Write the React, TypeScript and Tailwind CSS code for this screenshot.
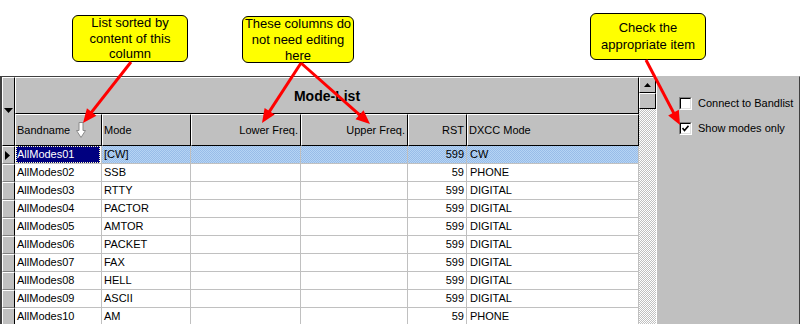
import React from "react";

const rows: [string, string, string, string][] = [
  ["AllModes01", "[CW]", "599", "CW"],
  ["AllModes02", "SSB", "59", "PHONE"],
  ["AllModes03", "RTTY", "599", "DIGITAL"],
  ["AllModes04", "PACTOR", "599", "DIGITAL"],
  ["AllModes05", "AMTOR", "599", "DIGITAL"],
  ["AllModes06", "PACKET", "599", "DIGITAL"],
  ["AllModes07", "FAX", "599", "DIGITAL"],
  ["AllModes08", "HELL", "599", "DIGITAL"],
  ["AllModes09", "ASCII", "599", "DIGITAL"],
  ["AllModes10", "AM", "59", "PHONE"],
];

function Arrow({ x1, y1, x2, y2 }: { x1: number; y1: number; x2: number; y2: number }) {
  const dx = x2 - x1;
  const dy = y2 - y1;
  const len = Math.sqrt(dx * dx + dy * dy);
  const ux = dx / len;
  const uy = dy / len;
  const hl = 14;
  const hw = 6;
  const bx = x2 - ux * hl;
  const by = y2 - uy * hl;
  const px = -uy;
  const py = ux;
  const pts = `${x2},${y2} ${bx + px * hw},${by + py * hw} ${bx - px * hw},${by - py * hw}`;
  return (
    <g>
      <line x1={x1} y1={y1} x2={bx + ux * 2} y2={by + uy * 2} stroke="#ff0000" strokeWidth={3} />
      <polygon points={pts} fill="#ff0000" />
    </g>
  );
}

const hdr =
  "h-[32px] bg-[#c0c0c0] border-t border-l border-t-white border-l-white border-r border-b border-r-black border-b-black flex items-center text-[11px] text-black shrink-0";
const cell = "h-[18px] border-r border-b border-[#c0c0c0] flex items-center text-[11px] text-black shrink-0 overflow-hidden whitespace-nowrap";
const selBg =
  "bg-[image:repeating-conic-gradient(#98bce8_0_25%,#b6d4f4_0_50%)] bg-[length:2px_2px]";

export default function App() {
  return (
    <div className="relative w-[800px] h-[324px] bg-white overflow-hidden font-['Liberation_Sans',Arial,sans-serif] select-none">
      {/* Callouts strip */}
      <div className="h-[76px] flex items-start">
        <div className="ml-[72px] mt-[15px] w-[116px] h-[47px] bg-[#ffff00] border border-black rounded-[6px] flex items-center justify-center text-center text-[13px] leading-[15.5px] text-black">
          <div>
            List sorted by
            <br />
            content of this
            <br />
            column
          </div>
        </div>
        <div className="ml-[54px] mt-[16px] w-[112px] h-[47px] bg-[#ffff00] border border-black rounded-[6px] flex items-center justify-center text-center text-[13px] leading-[16px] text-black whitespace-nowrap">
          <div>
            These columns do
            <br />
            not need editing
            <br />
            here
          </div>
        </div>
        <div className="ml-[236px] mt-[13px] w-[116px] h-[47px] bg-[#ffff00] border border-black rounded-[6px] flex items-center justify-center text-center text-[13px] leading-[16.5px] text-black">
          <div>
            Check the
            <br />
            appropriate item
          </div>
        </div>
      </div>

      {/* Main area */}
      <div className="flex h-[248px]">
        {/* Grid */}
        <div className="w-[639px] shrink-0 border-l-2 border-l-[#404040] border-t border-t-[#404040] flex flex-col">
          {/* Header */}
          <div className="flex h-[69px] shrink-0">
            <div className="w-[13px] h-[69px] bg-[#c0c0c0] border-t border-l border-white border-r border-r-black border-b border-b-black flex flex-col items-center shrink-0">
              <div className="h-[30px]" />
              <svg width="9" height="5" viewBox="0 0 9 5">
                <polygon points="0,0 9,0 4.5,5" fill="#000" />
              </svg>
            </div>
            <div className="flex flex-col">
              <div className="w-[624px] h-[37px] bg-[#c0c0c0] border-t border-l border-t-white border-l-white border-r border-b border-r-black border-b-black flex items-center justify-center">
                <span className="font-bold text-[14px] text-black mt-[1px]">Mode-List</span>
              </div>
              <div className="flex">
                <div className={`${hdr} w-[87px] pl-[1px]`}>
                  <span>Bandname</span>
                  <svg className="ml-[6px]" width="10" height="16" viewBox="0 0 10 16">
                    <polygon
                      points="3,0.5 7,0.5 7,8.5 9.5,8.5 5,15.5 0.5,8.5 3,8.5"
                      fill="#ffffff"
                      stroke="#8a8a8a"
                      strokeWidth="1"
                    />
                  </svg>
                </div>
                <div className={`${hdr} w-[89px] pl-[1px]`}>Mode</div>
                <div className={`${hdr} w-[110px] justify-end pr-[2px]`}>Lower Freq.</div>
                <div className={`${hdr} w-[107px] justify-end pr-[2px]`}>Upper Freq.</div>
                <div className={`${hdr} w-[59px] justify-end pr-[2px]`}>RST</div>
                <div className={`${hdr} w-[172px] pl-[1px]`}>DXCC Mode</div>
              </div>
            </div>
          </div>
          {/* Body */}
          <div className="flex flex-col">
            {rows.map((r, i) => {
              const sel = i === 0;
              const bg = sel ? selBg : "bg-white";
              return (
                <div key={r[0]} className="flex h-[18px] shrink-0">
                  <div className="w-[13px] h-[18px] bg-[#c0c0c0] border-t border-l border-white border-b border-b-[#808080] border-r border-r-black flex items-center pl-[2px] shrink-0">
                    {sel && (
                      <svg width="5" height="9" viewBox="0 0 5 9">
                        <polygon points="0,0 5,4.5 0,9" fill="#000" />
                      </svg>
                    )}
                  </div>
                  <div className={`${cell} w-[87px] ${sel ? "bg-white" : "bg-white"}`}>
                    {sel ? (
                      <div className="ml-[1px] w-[84px] h-[17px] bg-[#000080] text-white outline-1 outline-dotted outline-[#ffffc0] -outline-offset-1 flex items-center pl-[1px]">
                        {r[0]}
                      </div>
                    ) : (
                      <span className="pl-[2px]">{r[0]}</span>
                    )}
                  </div>
                  <div className={`${cell} w-[89px] pl-[2px] ${bg}`}>{r[1]}</div>
                  <div className={`${cell} w-[110px] ${bg}`} />
                  <div className={`${cell} w-[107px] ${bg}`} />
                  <div className={`${cell} w-[59px] justify-end pr-[2px] ${bg}`}>{r[2]}</div>
                  <div className={`${cell} w-[172px] pl-[3px] ${bg}`}>{r[3]}</div>
                </div>
              );
            })}
          </div>
        </div>

        {/* Vertical scrollbar */}
        <div className="w-[17px] shrink-0 flex flex-col border-t border-t-[#404040] bg-[image:repeating-conic-gradient(#c0c0c0_0_25%,#ffffff_0_50%)] bg-[length:2px_2px]">
          <div className="h-[16px] bg-[#c0c0c0] border-t border-l border-white border-r border-b border-r-black border-b-black flex items-center justify-center">
            <svg width="7" height="4" viewBox="0 0 7 4">
              <polygon points="0,4 7,4 3.5,0" fill="#000" />
            </svg>
          </div>
          <div className="h-[16px] bg-[#c0c0c0] border-t border-l border-white border-r border-b border-r-black border-b-black" />
        </div>

        {/* Right panel */}
        <div className="w-[144px] shrink-0 bg-[#c0c0c0] border-l border-l-white border-r border-r-[#404040] border-t border-t-[#c0c0c0] flex flex-col pl-[22px] pt-[20px] gap-[12px] text-[11px] text-black">
          <div className="flex items-center h-[13px]">
            <span className="w-[13px] h-[13px] bg-white border-t border-l border-[#808080] border-r border-b border-r-white border-b-white shrink-0 flex">
              <span className="flex-1 border-t border-l border-black border-r border-b border-r-[#dfdfdf] border-b-[#dfdfdf]" />
            </span>
            <span className="ml-[6px] whitespace-nowrap">Connect to Bandlist</span>
          </div>
          <div className="flex items-center h-[13px]">
            <span className="w-[13px] h-[13px] bg-white border-t border-l border-[#808080] border-r border-b border-r-white border-b-white shrink-0 flex">
              <span className="flex-1 border-t border-l border-black border-r border-b border-r-[#dfdfdf] border-b-[#dfdfdf] flex items-center justify-center">
                <svg width="7" height="7" viewBox="0 0 7 7">
                  <polyline points="0.5,3 2.5,5.5 6.5,0.8" fill="none" stroke="#000" strokeWidth="1.6" />
                </svg>
              </span>
            </span>
            <span className="ml-[6px] whitespace-nowrap">Show modes only</span>
          </div>
        </div>
      </div>

      {/* Annotation arrows */}
      <svg className="absolute inset-0 pointer-events-none" width="800" height="324" viewBox="0 0 800 324">
        <Arrow x1={131} y1={62} x2={83} y2={123} />
        <Arrow x1={301} y1={63} x2={262} y2={123} />
        <Arrow x1={301} y1={63} x2={370} y2={124} />
        <Arrow x1={646} y1={60} x2={680} y2={125} />
      </svg>
    </div>
  );
}
